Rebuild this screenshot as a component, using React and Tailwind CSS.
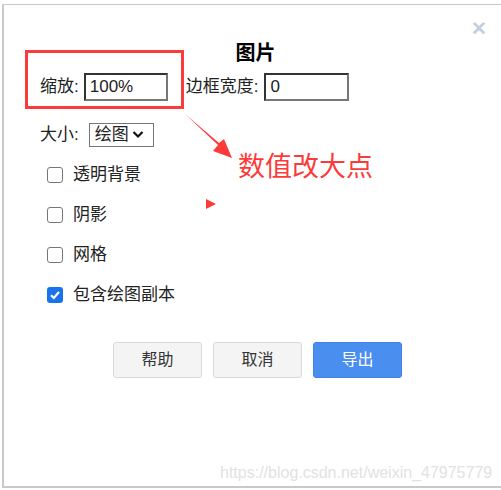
import React from 'react';

const font = { fontFamily: '"Liberation Sans", "Noto Sans CJK SC", sans-serif' };

const Check = ({ label, checked }) => (
    <label className="flex items-center h-[40px] pl-[5px]">
        {checked ? (
            <span className="w-[16px] h-[16px] rounded-[3px] bg-[#1a73e8] flex items-center justify-center">
                <svg width="12" height="12" viewBox="0 0 12 12">
                    <path d="M2 6.2 L4.8 9 L10 3" stroke="white" strokeWidth="2.2" fill="none" />
                </svg>
            </span>
        ) : (
            <span className="w-[16px] h-[16px] rounded-[3px] border border-[#767676] bg-white" />
        )}
        <span className="ml-[10px] text-[17px] text-[#222]">{label}</span>
    </label>
);

const App = () => {
    return (
        <div className="w-[501px] h-[490px] bg-white overflow-hidden" style={font}>
            <div className="relative ml-[2px] mt-[4px] h-[484px] border-l-2 border-t border-b-2 border-[#c9c9c9] bg-white">
                <span className="absolute right-[14px] top-[14px] text-[19px] font-bold leading-none text-[#c3cfdc]">✕</span>

                <div className="pt-[36px] text-center text-[20px] font-bold text-black leading-[24px] pl-[6px]">图片</div>

                <div className="flex items-center mt-[8px] pl-[36px] text-[17px] text-[#222]">
                    <span>缩放:</span>
                    <div className="ml-[5px] w-[84px] h-[28px] border-2 border-t-[#333] border-l-[#333] border-r-[#777] border-b-[#777] px-[4px] leading-[24px]">100%</div>
                    <span className="ml-[18px]">边框宽度:</span>
                    <div className="ml-[6px] w-[85px] h-[28px] border-2 border-t-[#333] border-l-[#333] border-r-[#777] border-b-[#777] px-[4px] leading-[24px]">0</div>
                </div>

                <div className="flex items-center mt-[21px] pl-[36px] text-[17px] text-[#222]">
                    <span>大小:</span>
                    <div className="ml-[10px] w-[65px] h-[24px] border border-[#767676] flex items-center px-[5px]">
                        <span>绘图</span>
                        <svg className="ml-[3px]" width="12" height="9" viewBox="0 0 12 9">
                            <path d="M1.5 2 L6 6.5 L10.5 2" stroke="#111" strokeWidth="2.2" fill="none" />
                        </svg>
                    </div>
                </div>

                <div className="mt-[7px] pl-[38px] flex flex-col">
                    <Check label="透明背景" />
                    <Check label="阴影" />
                    <Check label="网格" />
                    <Check label="包含绘图副本" checked />
                </div>

                <div className="flex gap-[11px] mt-[27px] pl-[109px]">
                    <button className="w-[89px] h-[36px] rounded-[3px] border border-[#d9d9d9] bg-[#f4f4f4] text-[16px] text-[#333]">帮助</button>
                    <button className="w-[89px] h-[36px] rounded-[3px] border border-[#d9d9d9] bg-[#f4f4f4] text-[16px] text-[#333]">取消</button>
                    <button className="w-[89px] h-[36px] rounded-[3px] border border-[#3f83ec] bg-[#4a8ef0] text-[16px] text-white">导出</button>
                </div>

                {/* annotation overlay */}
                <div className="absolute left-[21px] top-[45px] w-[159px] h-[59px] border-[3px] border-[#fd3a3a]" />
                <svg className="absolute left-[178px] top-[107px]" width="52" height="50" viewBox="0 0 52 50">
                    <path d="M3 2 L36 33 L31 39 L50 46 L42 27 L37 31 Z" fill="#fd3a3a" />
                </svg>
                <span className="absolute left-[234px] top-[144px] text-[27px] leading-[36px] text-[#fd3a3a]">数值改大点</span>
                <svg className="absolute left-[202px] top-[194px]" width="10" height="10" viewBox="0 0 10 10">
                    <path d="M0 0 L10 5 L0 10 Z" fill="#fd3a3a" />
                </svg>

                <span className="absolute left-[216px] top-[456px] text-[16px] text-[#e2e2e2]">https://blog.csdn.net/weixin_47975779</span>
            </div>
        </div>
    );
};

export default App;
